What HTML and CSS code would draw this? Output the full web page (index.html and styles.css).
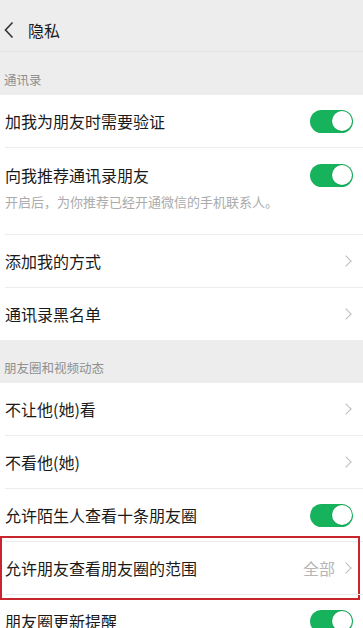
FILE: index.html
```html
<!DOCTYPE html>
<html lang="zh-CN">
<head>
<meta charset="utf-8">
<title>隐私</title>
<link rel="stylesheet" href="styles.css">
</head>
<body>
<div class="page">
  <header class="nav">
    <svg class="back" width="12" height="18" viewBox="0 0 12 18"><polyline points="9.5,1.5 2.5,9 9.5,16.5" fill="none" stroke="#333" stroke-width="1.6"/></svg>
    <span class="nav-title">隐私</span>
  </header>

  <div class="section-label">通讯录</div>
  <div class="group">
    <div class="row"><span class="row-title">加我为朋友时需要验证</span><span class="switch"></span></div>
    <div class="row row-tall">
      <div class="row-main"><span class="row-title">向我推荐通讯录朋友</span><span class="switch"></span></div>
      <div class="row-desc">开启后，为你推荐已经开通微信的手机联系人。</div>
    </div>
    <div class="row"><span class="row-title">添加我的方式</span><span class="chev"></span></div>
    <div class="row"><span class="row-title">通讯录黑名单</span><span class="chev"></span></div>
  </div>

  <div class="section-label">朋友圈和视频动态</div>
  <div class="group">
    <div class="row"><span class="row-title">不让他(她)看</span><span class="chev"></span></div>
    <div class="row"><span class="row-title">不看他(她)</span><span class="chev"></span></div>
    <div class="row"><span class="row-title">允许陌生人查看十条朋友圈</span><span class="switch"></span></div>
    <div class="row row-marked">
      <span class="row-title">允许朋友查看朋友圈的范围</span>
      <span class="row-value"><span class="value-text">全部</span><span class="chev"></span></span>
      <span class="mark"></span>
    </div>
    <div class="row"><span class="row-title">朋友圈更新提醒</span><span class="switch"></span></div>
  </div>
</div>
</body>
</html>
```
FILE: styles.css
```css
* { box-sizing: border-box; }
html, body { margin: 0; padding: 0; }
body {
  background: #ededed;
  font-family: "Noto Sans CJK SC", "Noto Sans", sans-serif;
  color: #1a1a1a;
  width: 363px;
  height: 628px;
  overflow: hidden;
}
.page { width: 363px; }
.nav {
  height: 52px;
  display: flex;
  align-items: center;
  padding: 8px 0 0 3px;
  border-bottom: 1px solid #e3e3e3;
  background: #ededed;
}
.back { display: block; }
.nav-title {
  margin-left: 13px;
  font-size: 16px;
  color: #1a1a1a;
}
.section-label {
  height: 43px;
  padding: 19px 0 0 4px;
  font-size: 12.5px;
  line-height: 18px;
  color: #8f8f8f;
}
.group { background: #fff; }
.row {
  position: relative;
  margin-left: 5px;
  padding-right: 10px;
  height: 53px;
  display: flex;
  align-items: center;
  justify-content: space-between;
  border-top: 1px solid #ececec;
}
.row:first-child { border-top: none; height: 52px; }
.row-title { font-size: 16px; line-height: 22px; }
.row-tall {
  height: 87px;
  flex-direction: column;
  align-items: stretch;
  justify-content: flex-start;
  padding-top: 16px;
}
.row-main {
  display: flex;
  align-items: center;
  justify-content: space-between;
  height: 22px;
}
.row-desc {
  margin-top: 7px;
  font-size: 13px;
  line-height: 18px;
  color: #ababab;
}
.switch {
  position: relative;
  width: 43px;
  height: 23px;
  border-radius: 12px;
  background: #16b35c;
  flex-shrink: 0;
}
.switch::after {
  content: "";
  position: absolute;
  right: 1.5px;
  top: 1.5px;
  width: 20px;
  height: 20px;
  border-radius: 50%;
  background: #fff;
  box-shadow: 0 0 0 0.6px rgba(0,0,0,0.12);
}
.chev {
  width: 8px;
  height: 8px;
  border-top: 1.4px solid #bdbdbd;
  border-right: 1.4px solid #bdbdbd;
  transform: rotate(45deg);
  margin-right: 3px;
  flex-shrink: 0;
}
.row-value { display: flex; align-items: center; }
.value-text {
  font-size: 16px;
  color: #b5b5b5;
  margin-right: 7px;
}
.mark {
  position: absolute;
  left: -5px;
  right: 3px;
  top: -6px;
  bottom: -6px;
  border: 2px solid #c8252d;
  pointer-events: none;
}
```
